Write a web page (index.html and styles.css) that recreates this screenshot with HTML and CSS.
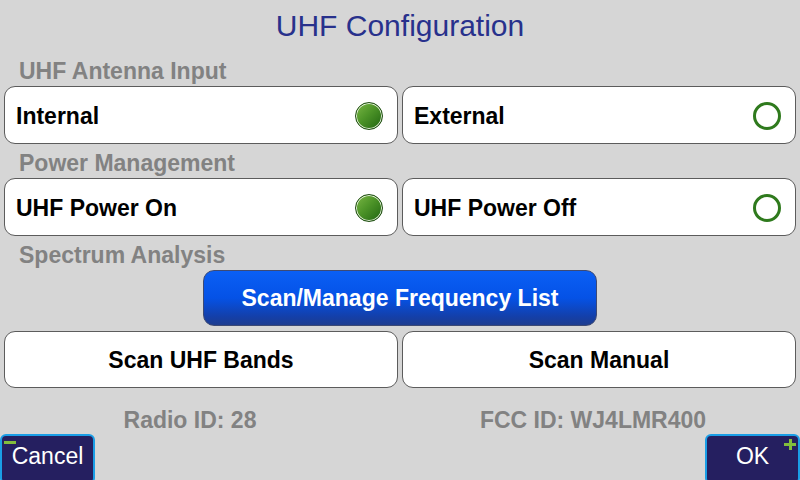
FILE: index.html
```html
<!DOCTYPE html>
<html lang="en">
<head>
  <meta charset="UTF-8">
  <title>UHF Configuration</title>
  <link rel="stylesheet" href="styles.css">
</head>
<body>
  <div class="screen">
    <h1 class="title">UHF Configuration</h1>

    <div class="content">
      <div class="section-label">UHF Antenna Input</div>
      <div class="row">
        <button class="option">Internal <span class="radio on"></span></button>
        <button class="option">External <span class="radio"></span></button>
      </div>

      <div class="section-label">Power Management</div>
      <div class="row">
        <button class="option">UHF Power On <span class="radio on"></span></button>
        <button class="option">UHF Power Off <span class="radio"></span></button>
      </div>

      <div class="section-label">Spectrum Analysis</div>
      <div class="center-row">
        <button class="primary">Scan/Manage Frequency List</button>
      </div>
      <div class="row">
        <button class="action">Scan UHF Bands</button>
        <button class="action">Scan Manual</button>
      </div>

      <div class="info">
        <span class="info-left">Radio ID: 28</span>
        <span class="info-right">FCC ID: WJ4LMR400</span>
      </div>
    </div>

    <div class="footer">
      <button class="softkey cancel"><span class="minus"></span>Cancel</button>
      <button class="softkey ok"><span class="plus"></span>OK</button>
    </div>
  </div>
</body>
</html>
```

FILE: styles.css
```css
body {
  margin: 0;
  background-color: #d6d6d6;
  font-family: "Liberation Sans", Arial, sans-serif;
}

.screen {
  width: 800px;
  height: 480px;
  display: flex;
  flex-direction: column;
  overflow: hidden;
}

.title {
  margin: 0;
  height: 52px;
  line-height: 52px;
  text-align: center;
  font-size: 30px;
  font-weight: normal;
  color: #28318c;
}

.content {
  padding: 0 4px;
  display: flex;
  flex-direction: column;
}

.section-label {
  height: 34px;
  line-height: 39px;
  padding-left: 15px;
  font-size: 23px;
  font-weight: bold;
  color: #828282;
}

.row {
  display: grid;
  grid-template-columns: 1fr 1fr;
  gap: 4px;
}

button {
  font-family: inherit;
  cursor: pointer;
}

.option,
.action {
  box-sizing: border-box;
  height: 58px;
  background: #ffffff;
  border: 1px solid #5c5c5c;
  border-radius: 11px;
  font-size: 23px;
  font-weight: bold;
  color: #000000;
}

.option {
  display: flex;
  align-items: center;
  justify-content: space-between;
  padding: 2px 14px 0 11px;
}

.action {
  height: 57px;
  padding-top: 2px;
}

.radio {
  box-sizing: border-box;
  width: 28px;
  height: 28px;
  border-radius: 50%;
  border: 3px solid #2f7a1d;
  background: #ffffff;
}

.radio.on {
  border: 1px solid #1f4e12;
  background: linear-gradient(135deg, #7bb845 0%, #4d9428 45%, #1f6410 100%);
  box-shadow: inset 0 0 0 1px #e6f0dc;
}

.center-row {
  display: flex;
  justify-content: center;
  margin-bottom: 5px;
}

.primary {
  box-sizing: border-box;
  width: 394px;
  height: 56px;
  border: 1px solid #3d4a74;
  border-radius: 11px;
  background: linear-gradient(#0a5ff5 0%, #0552e6 50%, #143fa8 85%, #1e3d8f 100%);
  color: #ffffff;
  font-size: 23px;
  font-weight: bold;
  padding-top: 2px;
}

.info {
  display: grid;
  grid-template-columns: 1fr 1fr;
  gap: 4px;
  padding-top: 19px;
  font-size: 23px;
  font-weight: bold;
  color: #828282;
}

.info-left {
  text-align: center;
  padding-right: 22px;
}

.info-right {
  text-align: center;
  padding-right: 12px;
}

.footer {
  margin-top: auto;
  display: flex;
  justify-content: space-between;
}

.softkey {
  position: relative;
  box-sizing: border-box;
  width: 95px;
  height: 50px;
  border: 2px solid #1a9ee6;
  border-radius: 6px;
  background: #251f60;
  color: #ffffff;
  font-size: 23px;
  padding: 0 0 6px;
}

.minus {
  position: absolute;
  left: 2px;
  top: 5px;
  width: 12px;
  height: 3px;
  background: #82bd3c;
}

.plus {
  position: absolute;
  right: 2px;
  top: 3px;
  width: 12px;
  height: 11px;
  background:
    linear-gradient(#82bd3c, #82bd3c) center / 12px 3px no-repeat,
    linear-gradient(#82bd3c, #82bd3c) center / 3px 11px no-repeat;
}
```
